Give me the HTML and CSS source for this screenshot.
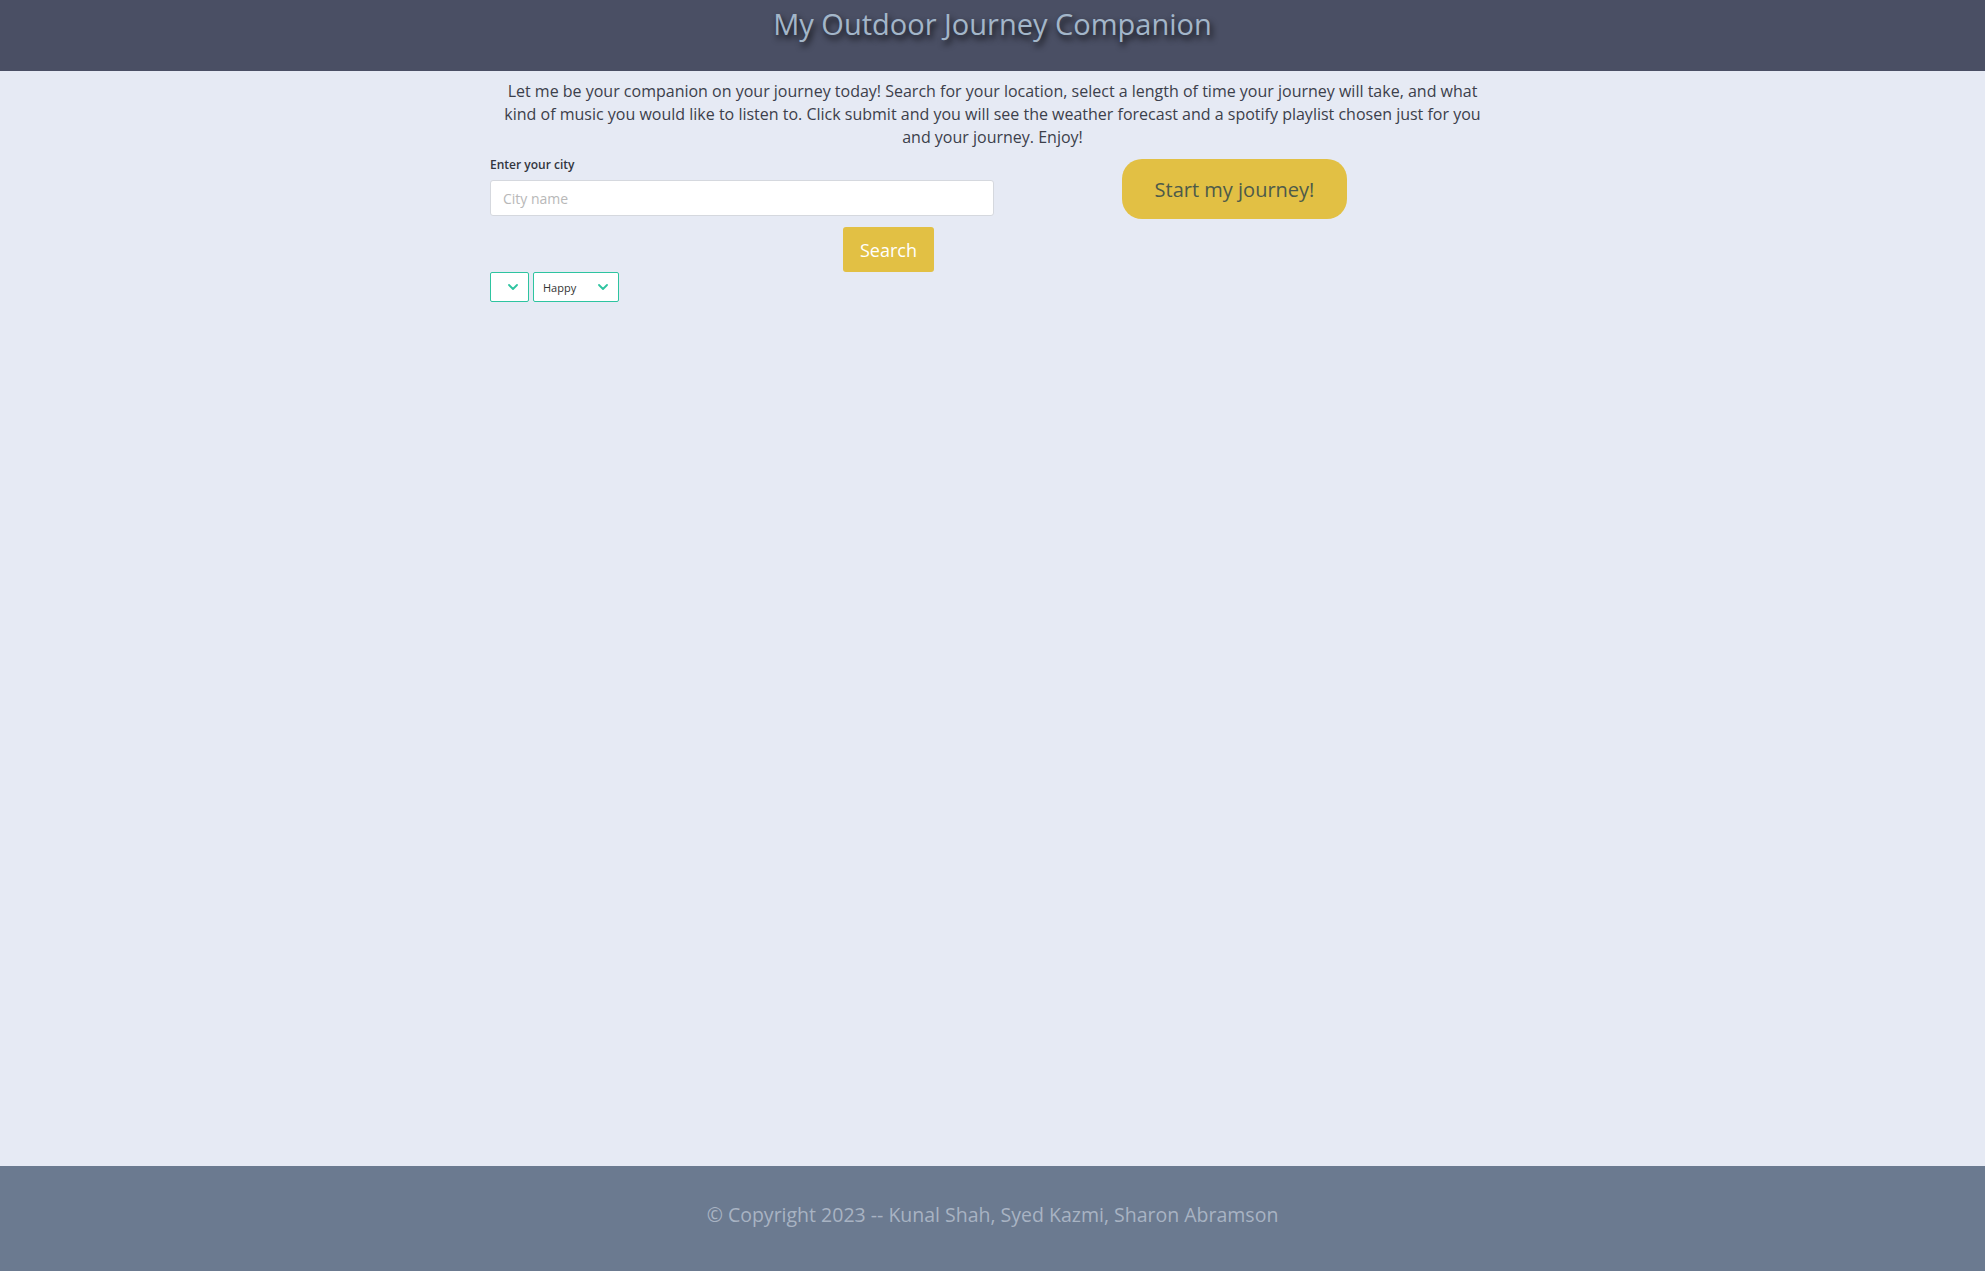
FILE: index.html
```html
<!DOCTYPE html>
<html lang="en">
<head>
<meta charset="utf-8">
<title>My Outdoor Journey Companion</title>
<link rel="stylesheet" href="styles.css">
</head>
<body>
<header class="site-header">
  <h1 class="site-title">My Outdoor Journey Companion</h1>
</header>
<main class="main">
  <div class="container">
    <p class="intro">Let me be your companion on your journey today! Search for your location, select a length of time your journey will take, and what kind of music you would like to listen to. Click submit and you will see the weather forecast and a spotify playlist chosen just for you and your journey. Enjoy!</p>
    <div class="columns">
      <div class="col-left">
        <label class="city-label" for="city">Enter your city</label>
        <input class="city-input" id="city" type="text" placeholder="City name">
        <button class="search-btn" type="button">Search</button>
        <div class="selects">
          <div class="select select-time">
            <svg class="chev" viewBox="0 0 10 6" width="10" height="6"><path d="M1 1 L5 5 L9 1" fill="none" stroke="#2ec4a0" stroke-width="1.8" stroke-linecap="round" stroke-linejoin="round"/></svg>
          </div>
          <div class="select select-mood">
            <span class="select-text">Happy</span>
            <svg class="chev" viewBox="0 0 10 6" width="10" height="6"><path d="M1 1 L5 5 L9 1" fill="none" stroke="#2ec4a0" stroke-width="1.8" stroke-linecap="round" stroke-linejoin="round"/></svg>
          </div>
        </div>
      </div>
      <div class="col-right">
        <button class="start-btn" type="button">Start my journey!</button>
      </div>
    </div>
  </div>
</main>
<footer class="site-footer">
  <p class="copyright">© Copyright 2023 -- Kunal Shah, Syed Kazmi, Sharon Abramson</p>
</footer>
</body>
</html>
```
FILE: styles.css
```css
* { box-sizing: border-box; }
html, body { height: 100%; }
body {
  margin: 0;
  min-height: 100vh;
  display: flex;
  flex-direction: column;
  background: #e6eaf4;
  font-family: "Open Sans", "Noto Sans", sans-serif;
  color: #3c404b;
}
.site-header {
  height: 71px;
  background: #4a4f64;
  display: flex;
  justify-content: center;
}
.site-title {
  margin: 0;
  padding-top: 4px;
  font-family: "Open Sans", sans-serif;
  font-weight: 400;
  font-size: 29px;
  line-height: 40px;
  color: #a3b6c9;
  text-shadow: 2px 4px 6px rgba(0,0,0,0.85);
}
.main { flex: 1; }
.container {
  width: 1005px;
  margin: 0 auto;
}
.intro {
  margin: 9px 0 0;
  padding: 0 8px;
  text-align: center;
  font-size: 16px;
  line-height: 23px;
  color: #3c404b;
}
.columns {
  display: flex;
  margin-top: 7px;
}
.col-left {
  width: 504px;
  display: flex;
  flex-direction: column;
  align-items: flex-start;
}
.city-label {
  font-size: 12px;
  font-weight: 600;
  line-height: 18px;
  color: #33363e;
}
.city-input {
  margin-top: 6px;
  width: 504px;
  height: 36px;
  border: 1px solid #d5d8de;
  border-radius: 3px;
  background: #fff;
  padding: 0 12px;
  font-family: "Open Sans", sans-serif;
  font-size: 14px;
  color: #333;
}
.city-input::placeholder { color: #b8b8b8; }
.search-btn {
  margin: 11px 0 0 353px;
  width: 91px;
  height: 45px;
  border: 0;
  border-radius: 3px;
  background: #e2c044;
  color: #fff;
  font-family: "Open Sans", sans-serif;
  font-size: 18px;
  padding: 0;
}
.selects {
  display: flex;
  gap: 4px;
  margin-top: 0;
}
.select {
  height: 30px;
  border: 1px solid #2ec4a0;
  border-radius: 2px;
  background: #fff;
  display: flex;
  align-items: center;
  justify-content: space-between;
  padding: 0 10px 0 9px;
}
.select-time { width: 39px; justify-content: flex-end; }
.select-mood { width: 86px; }
.select-text {
  font-size: 11px;
  color: #333;
}
.chev { display: block; }
.col-right {
  flex: 1;
  padding: 3px 0 0 128px;
}
.start-btn {
  width: 225px;
  height: 60px;
  border: 0;
  border-radius: 20px;
  background: #e2c044;
  color: #4d5a4a;
  font-family: "Open Sans", sans-serif;
  font-size: 20px;
  padding: 0;
}
.site-footer {
  height: 105px;
  background: #6b7a90;
  display: flex;
  align-items: center;
  justify-content: center;
  padding-bottom: 8px;
}
.copyright {
  margin: 0;
  font-size: 19.5px;
  color: #a8b3c3;
}
```
